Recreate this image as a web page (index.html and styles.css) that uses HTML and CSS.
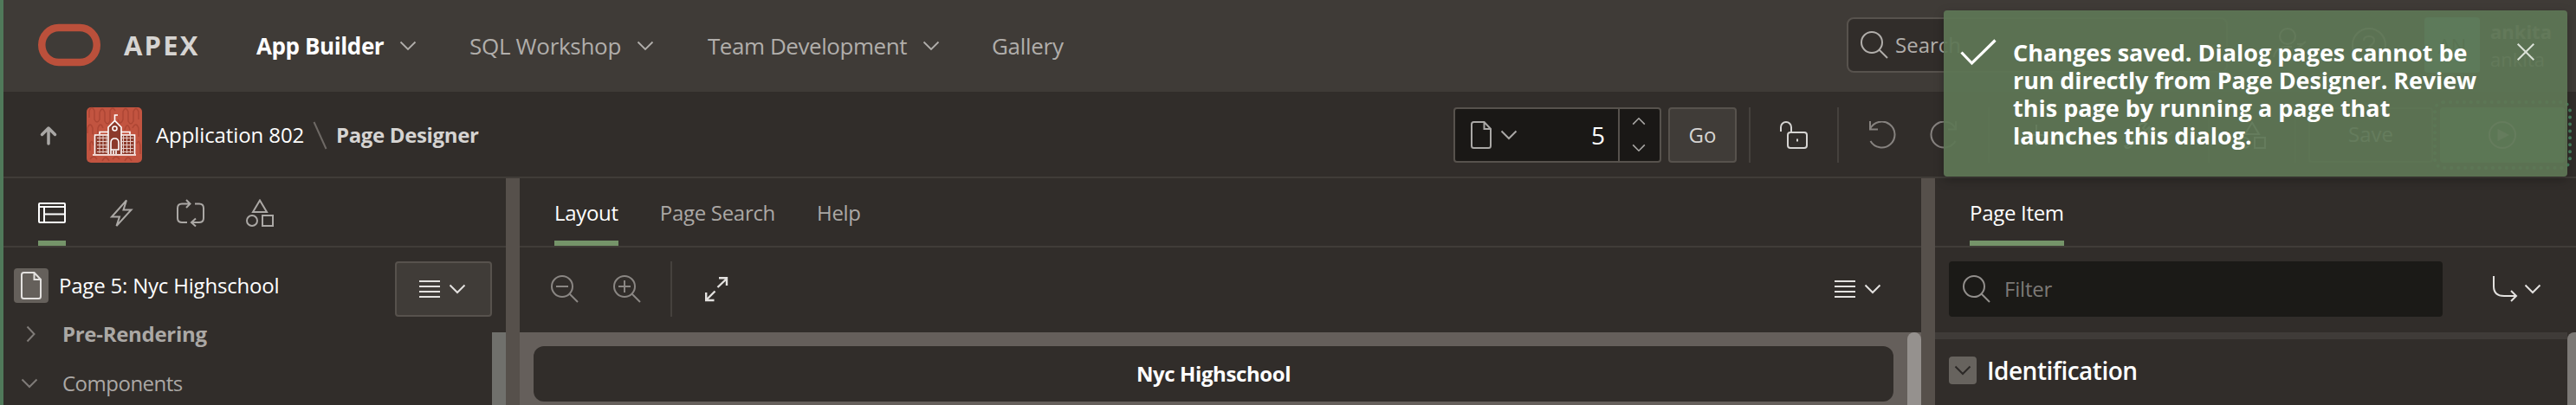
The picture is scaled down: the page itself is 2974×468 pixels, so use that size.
FILE: index.html
```html
<!DOCTYPE html>
<html lang="en">
<head>
<meta charset="utf-8">
<title>Page Designer</title>
<link rel="stylesheet" href="styles.css">
</head>
<body>
<svg class="defs" width="0" height="0">
  <symbol id="chev" viewBox="0 0 20 12"><path d="M1.500 1.500 10 10 18.500 1.500"/></symbol>
  <symbol id="lens" viewBox="0 0 32 32"><circle cx="13" cy="13" r="12"/><path d="M21.500 21.500 31 31"/></symbol>
  <symbol id="doc" viewBox="0 0 24 32"><path d="M1 3.500V28.500Q1 31 3.500 31H20.500Q23 31 23 28.500V9L15.500 1H3.500Q1 1 1 3.500ZM15.500 1V9H23"/></symbol>
  <symbol id="bars" viewBox="0 0 24 20"><path d="M0 1H24M0 7H24M0 13H24M0 19H24"/></symbol>
  <symbol id="shapes" viewBox="0 0 32 32"><path d="M16 1.500 24 15H8ZM19 19H31V31H19Z"/><circle cx="7" cy="25" r="6"/></symbol>
  <symbol id="undo" viewBox="0 0 32 32"><path d="M1 0V9.500H10M1 9A15 15 0 1 1 1.500 23"/></symbol>
</svg>
<div class="app">
  <header class="header">
    <svg class="logo" viewBox="0 0 72 48"><rect x="4.250" y="4" width="63.500" height="40" rx="19.500" ry="20"/></svg>
    <span class="brand">APEX</span>
    <nav class="nav">
      <span class="nav-item current">App Builder<svg class="chev"><use href="#chev"/></svg></span>
      <span class="nav-item sql">SQL Workshop<svg class="chev"><use href="#chev"/></svg></span>
      <span class="nav-item team">Team Development<svg class="chev"><use href="#chev"/></svg></span>
      <span class="nav-item gallery">Gallery</span>
    </nav>
    <div class="search"><svg class="i32"><use href="#lens"/></svg><span>Search</span></div>
    <svg class="user" viewBox="0 0 40 36"><circle cx="17" cy="10" r="9"/><path d="M1 34Q3 22 17 22H22M28 19 34 19M26 26 38 16M26 32H36"/></svg>
    <svg class="help" viewBox="0 0 40 40"><circle cx="20" cy="20" r="19"/><path d="M14 15Q14 10 20 10T26 15C26 20 20 19 20 25M20 29V31"/></svg>
    <div class="avatar">AN</div>
    <div class="account"><b>ankita</b><span>ankita</span></div>
  </header>

  <div class="toolbar">
    <svg class="up" viewBox="0 0 18 21"><path d="M9 20V2.500M1.500 9.500 9 2 16.500 9.500"/></svg>
    <svg class="appicon" viewBox="0 0 64 64">
      <rect width="64" height="64" rx="5" fill="#c25440" stroke="none"/>
      <path class="wave" d="M3 12V4Q6-3 9 4V14Q12 20 15 14V6Q18-2 21 6V16Q24 22 27 16V4Q30-2 33 4M36 14Q39 22 42 14V5Q45-2 48 5V16Q51 22 54 16V5Q57-2 60 5V14M1 30V24Q4 16 7 24V30Q10 36 13 30V24Q16 16 19 24M44 26Q47 16 50 26M53 24Q57 16 60 24V34M4 50V42Q6 36 8 44M58 42Q60 36 62 44V54M4 60Q8 54 12 60M18 62Q22 54 26 62M30 60Q34 54 38 60M44 62Q48 54 52 62"/>
      <path fill="#8c3a2b" stroke="none" d="M10 32H25V54H10ZM40 32H55V54H40ZM25 54V23L32.500 16 40 23V54Z"/>
      <path class="bld" d="M9.500 54V32H25M55.500 54V32H40M15 31V28.500H25M40 28.500H50V31M25 54V23L32.500 15.500 40 23V54M32.500 15V9H36M28 54V41Q28 36 32.500 36T37 41V49H28M31 50V54M34 50V54M7 55H57"/>
      <circle class="bld" cx="32.500" cy="24.500" r="2.500"/>
      <path class="grid" d="M12 35.500H24M12 39.500H24M12 43.500H24M12 47.500H24M12 51.500H24M15 33V53M19 33V53M23 33V53M41 35.500H54M41 39.500H54M41 43.500H54M41 47.500H54M41 51.500H54M42.500 33V53M46.500 33V53M50.500 33V53"/>
    </svg>
    <span class="crumb">Application 802</span>
    <svg class="slash" viewBox="0 0 17 33"><path d="M1.500 1 15.500 32"/></svg>
    <span class="crumb here">Page Designer</span>
    <div class="pagebox">
      <svg class="doc"><use href="#doc"/></svg><svg class="chev"><use href="#chev"/></svg>
      <span class="pagenum">5</span>
      <span class="spin"><svg class="chev flip"><use href="#chev"/></svg><svg class="chev"><use href="#chev"/></svg></span>
    </div>
    <div class="go">Go</div>
    <i class="sep s1"></i>
    <svg class="lock" viewBox="0 0 32 32"><rect x="9" y="13" width="22" height="18" rx="3"/><path d="M1 12V7A6 6 0 0 1 13 7V13M20 20.500V23.500"/></svg>
    <i class="sep s2"></i>
    <svg class="undo"><use href="#undo"/></svg>
    <svg class="undo redo"><use href="#undo"/></svg>
    <i class="sep s3"></i>
    <svg class="plus" viewBox="0 0 60 32"><path d="M12 4V28M0 16H24M40 12 48 20 56 12"/></svg>
    <svg class="wrench" viewBox="0 0 60 32"><path d="M3 29 18 14M16 9A7 7 0 0 1 26 3L22 8 25 11 29 7A7 7 0 0 1 20 16L7 30Q2 33 1 28M40 12 48 20 56 12"/></svg>
    <i class="sep s4"></i>
    <svg class="shapes"><use href="#shapes"/></svg>
    <i class="sep s5"></i>
    <div class="save">Save</div>
    <div class="run"><svg viewBox="0 0 32 32"><circle cx="16" cy="16" r="15"/><path class="play" d="M10.500 9V23L24 16Z"/></svg></div>
  </div>

  <main class="main">
    <section class="pane tree">
      <div class="tabs icons">
        <span class="tab on"><svg class="i32" viewBox="0 0 32 32"><rect x="1" y="5" width="30" height="22" rx="1"/><path d="M1 9H31M7 9V27M7 17.500H31"/></svg></span>
        <span class="tab"><svg class="i32" viewBox="0 0 32 32"><path d="M22 1.500 5 20.500H14L10.500 31 27.500 12.500H18.500Z"/></svg></span>
        <span class="tab"><svg class="i32" viewBox="0 0 32 32"><path d="M15 5.500H6Q1 5.500 1 10.500V22Q1 27 6 27H12M11 1 15.500 5.500 11 10M21 5.500H26Q31 5.500 31 10.500V22Q31 27 26 27H17M22 22.500 17 27 22 31.500"/></svg></span>
        <span class="tab"><svg class="i32"><use href="#shapes"/></svg></span>
      </div>
      <div class="treebody">
        <div class="treelist">
          <div class="row root"><span class="docbox"><svg class="doc"><use href="#doc"/></svg></span><span>Page 5: Nyc Highschool</span></div>
          <div class="row pre"><svg class="right" viewBox="0 0 11 20"><path d="M1.500 1.500 9.500 10 1.500 18.500"/></svg><b>Pre-Rendering</b></div>
          <div class="row comp"><svg class="chev"><use href="#chev"/></svg><span>Components</span></div>
        </div>
        <div class="menubtn"><svg class="bars"><use href="#bars"/></svg><svg class="chev"><use href="#chev"/></svg></div>
        <i class="track"></i>
      </div>
    </section>
    <i class="splitter"></i>
    <section class="pane center">
      <div class="tabs"><span class="tab on">Layout</span><span class="tab">Page Search</span><span class="tab">Help</span></div>
      <div class="tools">
        <svg class="i32 dim" viewBox="0 0 32 32"><circle cx="13" cy="13" r="12"/><path d="M21.500 21.500 31 31M6 13H20"/></svg>
        <svg class="i32 dim" viewBox="0 0 32 32"><circle cx="13" cy="13" r="12"/><path d="M21.500 21.500 31 31M6 13H20M13 6V20"/></svg>
        <i class="sep"></i>
        <svg class="expand" viewBox="0 0 26 28"><path d="M14.500 12 25 2M16 1.200H25V10M11.500 16.500 1.500 26.500M1.200 18V27H10.500"/></svg>
        <svg class="bars"><use href="#bars"/></svg><svg class="chev"><use href="#chev"/></svg>
      </div>
      <div class="canvas"><div class="card">Nyc Highschool</div><i class="thumb"></i></div>
    </section>
    <i class="splitter"></i>
    <section class="pane props">
      <div class="tabs"><span class="tab on">Page Item</span></div>
      <div class="filterrow">
        <div class="filter"><svg class="i32"><use href="#lens"/></svg><span>Filter</span></div>
        <svg class="goto" viewBox="0 0 28 30"><path d="M1 0V12Q1 23 13 23H27M21 17 27 23 21 29"/></svg><svg class="chev"><use href="#chev"/></svg>
      </div>
      <div class="groups">
        <div class="group"><span class="toggle"><svg class="chev"><use href="#chev"/></svg></span><span>Identification</span></div>
        <i class="thumb2"></i>
      </div>
    </section>
  </main>

  <div class="toast">
    <svg class="check" viewBox="0 0 42 30"><path d="M1.500 15.500 13.500 28 40.500 1.500"/></svg>
    <p>Changes saved. Dialog pages cannot be<br><span>run directly from Page Designer. Review</span><br>this page by running a page that<br>launches this dialog.</p>
    <svg class="close" viewBox="0 0 20 20"><path d="M.7.7 19.300 19.300M19.300.7.7 19.300"/></svg>
  </div>
</div>
</body>
</html>
```
FILE: styles.css
```css
* { box-sizing: border-box; }
body {
  margin: 0;
  background: #312d2a;
  color: #fff;
  font: 24px/32px "Open Sans", "Noto Sans", sans-serif;
  white-space: nowrap;
}
svg { display: block; flex: none; fill: none; stroke: currentColor; stroke-width: 2; overflow: visible; }
.defs { position: absolute; }
.i32 { width: 32px; height: 32px; }
.chev { width: 20px; height: 12px; }
.bars { width: 24px; height: 20px; }
.doc { width: 24px; height: 32px; }

.app {
  position: relative;
  width: 2974px;
  height: 468px;
  overflow: hidden;
  border-left: 4px solid #50795a;
  display: flex;
  flex-direction: column;
}

/* Header */
.header { height: 106px; flex: none; background: #3f3b37; display: flex; align-items: center; padding: 0 0 2px 40px; color: #b1aeab; }
.logo { width: 72px; height: 48px; stroke: #bb503b; stroke-width: 8.500; }
.brand { width: 180px; flex: none; padding-left: 27px; font-size: 31px; font-weight: 700; letter-spacing: 2.200px; color: #d6d4d2; }
.nav { display: flex; flex: none; font-size: 26px; width: 1836px; padding-top: 1px; }
.nav-item { display: flex; align-items: center; letter-spacing: -.3px; }
.nav-item .chev { stroke-width: 1.800; color: #b1aeab; }
.current { width: 246px; color: #fff; font-weight: 700; letter-spacing: -.4px; gap: 18px; }
.sql { width: 275px; gap: 18px; }
.team { width: 328px; gap: 18px; letter-spacing: -.45px; }
.search { width: 440px; height: 64px; flex: none; border: 2px solid #57524d; border-radius: 8px; background: #312d2a; display: flex; align-items: center; gap: 8px; padding-left: 14px; margin-right: 52px; }
.user { width: 40px; height: 36px; margin: 0 51px 4px 0; }
.help { width: 40px; height: 40px; margin-right: 44px; }
.avatar { width: 64px; height: 64px; flex: none; background: #5bb8a8; border-radius: 4px; color: #1f5a45; text-align: center; line-height: 66px; margin-right: 12px; }
.account { display: flex; flex-direction: column; font-size: 22px; }

/* Toolbar */
.toolbar { height: 100px; flex: none; border-bottom: 2px solid #403c38; display: flex; align-items: center; padding-left: 43px; padding-top: 2px; color: #d6d4d2; }
.up { width: 18px; height: 21px; margin-right: 35px; color: #a9a7a5; stroke-width: 3.500; stroke-linecap: round; stroke-linejoin: round; }
.appicon { width: 64px; height: 64px; margin-right: 16px; }
.wave { stroke: #ad4634; stroke-width: 1.500; }
.bld { stroke: #fff; stroke-width: 1.600; }
.grid { stroke: #e5c9c3; stroke-width: 1; }
.crumb { width: 181px; flex: none; color: #fff; letter-spacing: -.1px; }
.slash { width: 17px; height: 33px; margin-right: 10px; color: #6e6965; }
.here { width: 1290px; font-weight: 700; letter-spacing: -.35px; color: #d6d4d2; }
.pagebox { width: 240px; height: 64px; flex: none; border: 2px solid #57524d; border-radius: 4px; background: #1a1816; display: flex; align-items: center; padding-left: 18px; color: #a9a7a5; }
.pagebox > .chev { margin-left: 10px; }
.pagenum { flex: 1; text-align: right; padding: 0 15px 0 0; font-size: 28px; color: #fff; }
.spin { width: 48px; height: 60px; border-left: 2px solid #57524d; display: flex; flex-direction: column; align-items: center; justify-content: space-between; padding: 9px 2px 10px 0; }
.spin .chev { width: 16px; height: 10px; }
.flip { transform: rotate(180deg); }
.go { width: 79px; height: 64px; flex: none; margin-left: 8px; border: 2px solid #57524d; border-radius: 4px; background: #403c38; text-align: center; line-height: 60px; }
.sep { width: 2px; height: 64px; flex: none; background: #45413d; }
.s1 { margin: 0 34px 0 14px; }
.lock { width: 32px; height: 32px; }
.s2 { margin: 0 35px 0 34px; }
.undo { width: 32px; height: 32px; color: #86827f; }
.redo { transform: scaleX(-1); margin-left: 37px; }
.s3 { margin: 0 42px 0 36px; }
.plus { width: 60px; height: 32px; margin-right: 53px; }
.wrench { width: 60px; height: 32px; }
.s4 { margin: 0 33px 0 37px; }
.shapes { width: 32px; height: 32px; }
.s5 { margin: 0 14px 0 33px; }
.save { width: 144px; height: 64px; flex: none; border: 2px solid #57524d; border-radius: 4px; text-align: center; line-height: 58px; margin-right: 8px; }
.run { width: 144px; height: 64px; flex: none; background: #4f8a5a; border-radius: 4px; display: flex; align-items: center; justify-content: center; outline: 4px dotted #47805f; outline-offset: 4px; }
.run svg { width: 32px; height: 32px; }
.play { fill: currentColor; stroke: none; }

/* Panes */
.main { flex: 1; display: flex; min-height: 0; }
.pane { display: flex; flex-direction: column; flex: none; min-width: 0; }
.tree { width: 580px; }
.center { width: 1618px; }
.props { width: 740px; }
.splitter { width: 16px; flex: none; background: #56504b; }
.tabs { height: 80px; flex: none; border-bottom: 2px solid #403c38; display: flex; gap: 48px; padding-left: 40px; color: #aba8a5; letter-spacing: -.3px; }
.tab { height: 78px; line-height: 80px; }
.on { color: #fff; border-bottom: 6px solid #759469; }
.icons .tab { padding-top: 24px; line-height: 0; }

.treebody { display: flex; flex: 1; }
.treelist { width: 452px; padding: 24px 0 0 12px; }
.row { display: flex; align-items: center; height: 40px; letter-spacing: -.2px; }
.docbox { width: 40px; height: 40px; border-radius: 4px; background: #65605b; display: flex; align-items: center; justify-content: center; margin-right: 12px; color: #e3e1df; }
.pre, .comp { color: #aba8a5; }
.pre { margin-top: 16px; padding-left: 14px; letter-spacing: -.3px; }
.pre b { font-weight: 700; }
.right { width: 11px; height: 20px; margin-right: 31px; color: #7f7b78; }
.comp { margin-top: 17px; padding-left: 8px; letter-spacing: -.5px; }
.comp .chev { margin-right: 28px; color: #7f7b78; }
.menubtn { width: 112px; height: 64px; margin: 16px 0 0; border: 2px solid #57524d; border-radius: 4px; background: #403c38; color: #e3e1df; display: flex; align-items: center; gap: 10px; padding-left: 26px; }
.track { width: 16px; margin-top: 98px; background: #70706c; }

.tools { height: 98px; flex: none; display: flex; align-items: center; padding: 0 0 2px 36px; color: #e3e1df; }
.dim { color: #8a8683; margin-right: 40px; }
.tools .sep { margin: 0 38px 0 -6px; }
.expand { width: 26px; height: 28px; stroke-width: 2.400; margin-right: 1278px; }
.tools .chev { margin-left: 10px; }
.canvas { flex: 1; background: #655f5b; display: flex; padding-left: 16px; }
.card { width: 1570px; height: 64px; margin: 16px 16px 0 0; border-radius: 12px; background: #312d2a; text-align: center; font-weight: 700; line-height: 64px; letter-spacing: -.4px; }
.thumb { width: 16px; background: #95918e; border-radius: 8px 8px 0 0; }

.filterrow { height: 98px; flex: none; display: flex; align-items: center; padding: 0 0 2px 16px; color: #e3e1df; }
.filter { width: 570px; height: 64px; border-radius: 4px; background: #1b1a17; display: flex; align-items: center; gap: 16px; padding-left: 16px; color: #928f8c; margin-right: 58px; }
.filter span { color: #7c7976; letter-spacing: -.2px; }
.goto { width: 28px; height: 30px; margin-right: 8px; }
.groups { flex: 1; display: flex; justify-content: space-between; }
.group { flex: 1; border-top: 8px solid #3f3b38; display: flex; padding: 20px 0 0 16px; gap: 12px; font-size: 28px; font-weight: 600; letter-spacing: -.5px; line-height: 32px; }
.toggle { width: 32px; height: 32px; border-radius: 4px; background: #67635e; color: #2b2826; display: flex; align-items: center; justify-content: center; }
.thumb2 { width: 10px; background: #7c7976; border-radius: 8px 0 0 0; }

/* Notification over the header */
.toast {
  position: absolute;
  top: 12px;
  left: 2240px;
  width: 720px;
  height: 192px;
  border-radius: 4px;
  background: rgba(94, 118, 85, .94);
  box-shadow: 0 4px 12px rgba(0, 0, 0, .25);
  display: flex;
  align-items: flex-start;
  padding: 33px 0 0 19px;
}
.check { width: 42px; height: 30px; stroke-width: 3.200; margin-right: 19px; }
.toast p { margin: 0; width: 582px; font-weight: 700; font-size: 27px; line-height: 32px; }
.toast span { letter-spacing: -.1px; }
.close { width: 20px; height: 20px; margin-top: 5px; color: #dbe2d8; }
```
